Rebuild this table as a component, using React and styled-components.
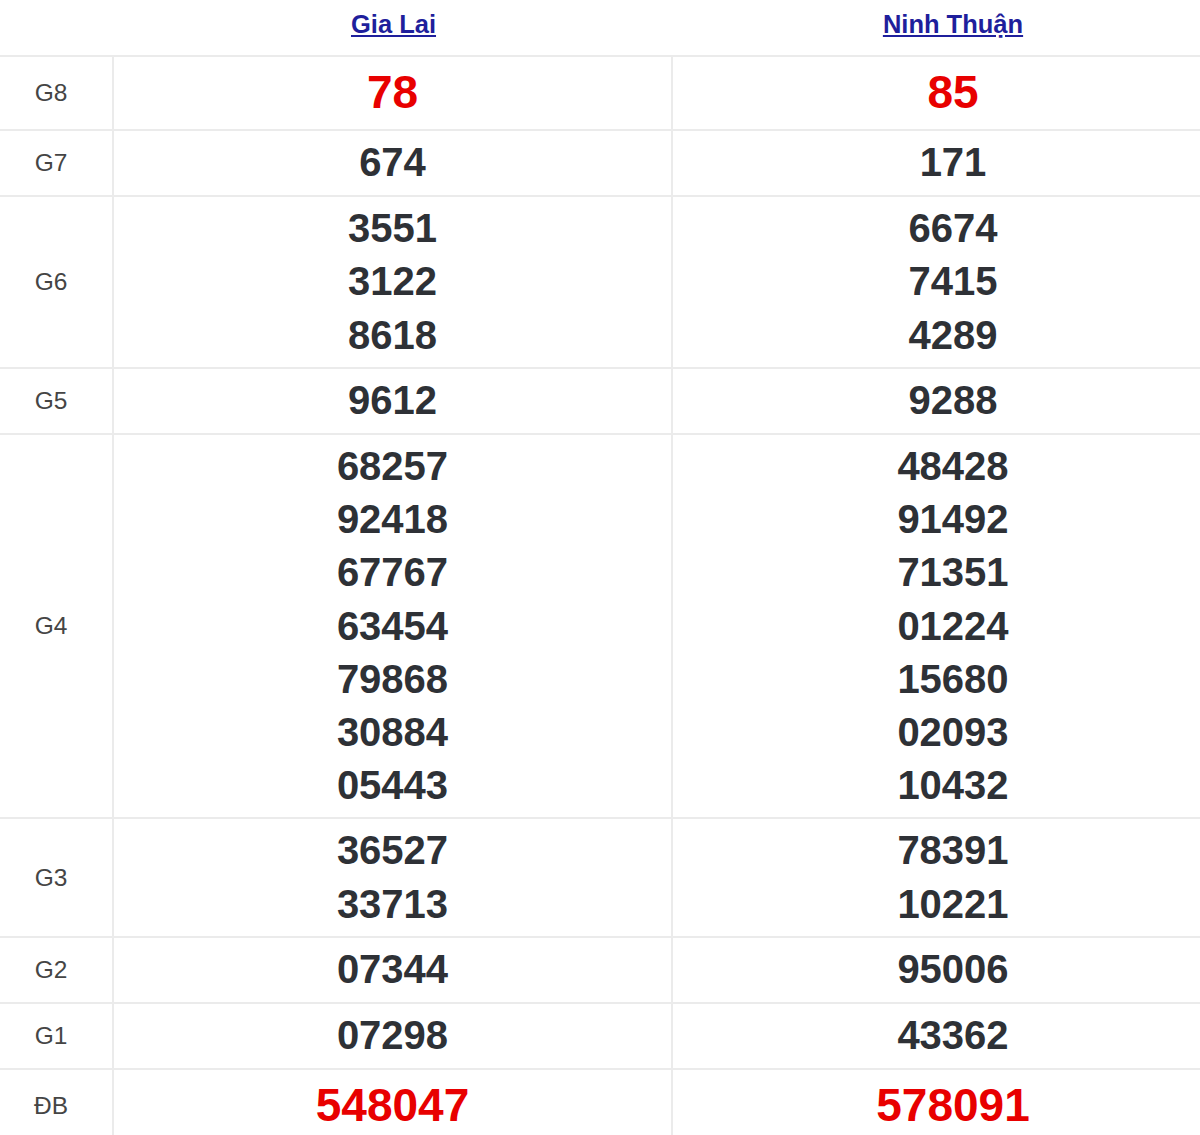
import React from "react";
import styled, { createGlobalStyle } from "styled-components";

const Global = createGlobalStyle`
  html, body { margin: 0; padding: 0; background: #fff; overflow: hidden; }
  body { font-family: "Liberation Sans", Arial, sans-serif; }
`;

const Table = styled.table`
  width: 1233px;
  border-collapse: separate;
  border-spacing: 0;
  table-layout: fixed;
  font-family: "Liberation Sans", Arial, sans-serif;
`;

const HeadCell = styled.th`
  height: 57px;
  padding: 0 0 6px;
  border-bottom: 2px solid #ebebeb;
  text-align: center;
  vertical-align: middle;
  font-weight: normal;
  box-sizing: border-box;
`;

const ProvinceLink = styled.a`
  font-size: 25.5px;
  font-weight: bold;
  color: #1f1f9c;
  text-decoration: underline;
  text-underline-offset: 2px;
`;

const Label = styled.td`
  width: 112px;
  padding: 5px 10px 5px 0;
  border-bottom: 2px solid #ebebeb;
  border-right: 2px solid #ebebeb;
  text-align: center;
  vertical-align: middle;
  font-size: 24.5px;
  color: #454545;
`;

const Prize = styled.td`
  padding: ${(p) => (p.$tall ? "5px 0 5px" : "5px 0 6px")};
  border-bottom: 2px solid #ebebeb;
  border-right: ${(p) => (p.$last ? "none" : "2px solid #ebebeb")};
  text-align: center;
  vertical-align: middle;
`;

const Num = styled.div`
  font-weight: bold;
  font-size: ${(p) => (p.$big ? "46px" : "40px")};
  line-height: ${(p) => (p.$big ? "61px" : "53.2px")};
  color: ${(p) => (p.$big ? "#e80000" : "#2e3136")};
`;

const rows = [
  { label: "G8", big: true, a: ["78"], b: ["85"] },
  { label: "G7", a: ["674"], b: ["171"] },
  { label: "G6", a: ["3551", "3122", "8618"], b: ["6674", "7415", "4289"] },
  { label: "G5", a: ["9612"], b: ["9288"] },
  {
    label: "G4",
    a: ["68257", "92418", "67767", "63454", "79868", "30884", "05443"],
    b: ["48428", "91492", "71351", "01224", "15680", "02093", "10432"],
  },
  { label: "G3", a: ["36527", "33713"], b: ["78391", "10221"] },
  { label: "G2", a: ["07344"], b: ["95006"] },
  { label: "G1", a: ["07298"], b: ["43362"] },
  { label: "ĐB", big: true, a: ["548047"], b: ["578091"] },
];

export default function App() {
  return (
    <>
      <Global />
      <Table>
        <colgroup>
          <col style={{ width: 114 }} />
          <col style={{ width: 559 }} />
          <col style={{ width: 560 }} />
        </colgroup>
        <thead>
          <tr>
            <HeadCell />
            <HeadCell>
              <ProvinceLink href="#">Gia Lai</ProvinceLink>
            </HeadCell>
            <HeadCell>
              <ProvinceLink href="#">Ninh Thuận</ProvinceLink>
            </HeadCell>
          </tr>
        </thead>
        <tbody>
          {rows.map((r) => {
            const tall = r.a.length > 1;
            return (
              <tr key={r.label}>
                <Label>{r.label}</Label>
                <Prize $tall={tall}>
                  {r.a.map((n, i) => (
                    <Num key={i} $big={r.big}>{n}</Num>
                  ))}
                </Prize>
                <Prize $tall={tall} $last>
                  {r.b.map((n, i) => (
                    <Num key={i} $big={r.big}>{n}</Num>
                  ))}
                </Prize>
              </tr>
            );
          })}
        </tbody>
      </Table>
    </>
  );
}
